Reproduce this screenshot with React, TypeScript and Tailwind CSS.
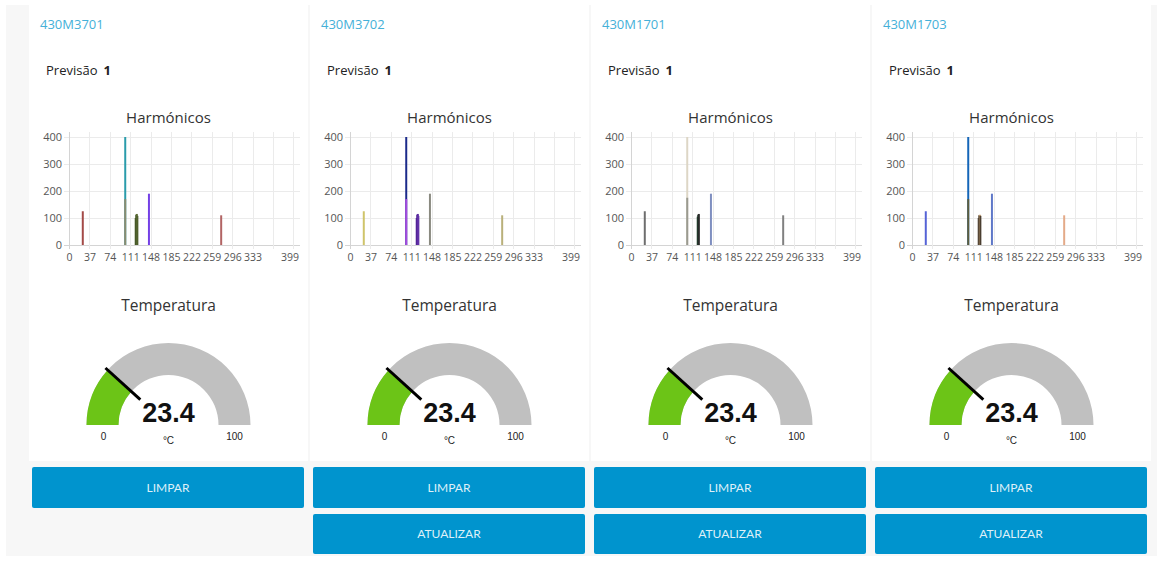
import React from 'react';

type Bar = { x: number; v: number; c: string; w?: number };

type Machine = { id: string; bars: Bar[]; refresh: boolean };

const machines: Machine[] = [
  {
    id: '430M3701',
    refresh: false,
    bars: [
      { x: 25, v: 125, c: '#a34a47' },
      { x: 102, v: 400, c: '#2a9cab' },
      { x: 102, v: 170, c: '#8c8c70' },
      { x: 121, v: 100, c: '#4e5f2c' },
      { x: 122, v: 112, c: '#3f5226' },
      { x: 123, v: 115, c: '#5b6b33' },
      { x: 124, v: 108, c: '#4e5f2c' },
      { x: 145, v: 190, c: '#7440e6' },
      { x: 276, v: 110, c: '#b26464' },
    ],
  },
  {
    id: '430M3702',
    refresh: true,
    bars: [
      { x: 25, v: 125, c: '#cfc46a' },
      { x: 102, v: 400, c: '#1b2a8a' },
      { x: 102, v: 170, c: '#a64be0' },
      { x: 121, v: 100, c: '#5a2aa0' },
      { x: 122, v: 112, c: '#4d2290' },
      { x: 123, v: 115, c: '#5a2aa0' },
      { x: 124, v: 108, c: '#6232a8' },
      { x: 145, v: 190, c: '#8a8a80' },
      { x: 276, v: 110, c: '#b9b07a' },
    ],
  },
  {
    id: '430M1701',
    refresh: true,
    bars: [
      { x: 25, v: 125, c: '#6e6e6e' },
      { x: 102, v: 400, c: '#ddd6c6' },
      { x: 102, v: 175, c: '#9a9a90' },
      { x: 121, v: 105, c: '#2f4a3a' },
      { x: 122, v: 112, c: '#1f3a2a' },
      { x: 123, v: 115, c: '#2a2a2a' },
      { x: 145, v: 190, c: '#7f8fc0' },
      { x: 276, v: 110, c: '#808080' },
    ],
  },
  {
    id: '430M1703',
    refresh: true,
    bars: [
      { x: 25, v: 125, c: '#5563d6' },
      { x: 102, v: 400, c: '#1566b8' },
      { x: 102, v: 170, c: '#5e5e3e' },
      { x: 121, v: 100, c: '#4a3e30' },
      { x: 122, v: 110, c: '#3c3228' },
      { x: 123, v: 112, c: '#c8a070' },
      { x: 124, v: 108, c: '#4a3e30' },
      { x: 145, v: 190, c: '#5f78c8' },
      { x: 276, v: 110, c: '#e4aa88' },
    ],
  },
];

// chart scale
const X0 = 40;
const KX = 20.4 / 37;
const Y0 = 117;
const KY = 0.27;
const sx = (u: number) => X0 + u * KX;
const sy = (v: number) => Y0 - v * KY;

const xTicks = [0, 37, 74, 111, 148, 185, 222, 259, 296, 333];

function HarmonicChart({ bars }: { bars: Bar[] }) {
  return (
    <svg width={279} height={140} className="block font-['Open_Sans',sans-serif]">
      {[0, 100, 200, 300, 400].map((v) => (
        <g key={v}>
          <line x1={35} x2={271} y1={sy(v) + 0.5} y2={sy(v) + 0.5} stroke={v === 0 ? '#d4d4d4' : '#ebebeb'} />
          <text x={33} y={sy(v) + 4} textAnchor="end" fontSize={11} fill="#555">
            {v}
          </text>
        </g>
      ))}
      {Array.from({ length: 12 }).map((_, i) => (
        <line
          key={i}
          x1={Math.round(sx(i * 37)) + 0.5}
          x2={Math.round(sx(i * 37)) + 0.5}
          y1={4}
          y2={121}
          stroke={i === 0 ? '#d4d4d4' : '#ebebeb'}
        />
      ))}
      {xTicks.map((t) => (
        <text key={t} x={sx(t) + 0.5} y={133} textAnchor="middle" fontSize={10.5} fill="#555">
          {t}
        </text>
      ))}
      <text x={sx(399) + 1} y={133} textAnchor="middle" fontSize={10.5} fill="#555">
        399
      </text>
      {bars.map((b, i) => (
        <line key={i} x1={sx(b.x)} x2={sx(b.x)} y1={Y0} y2={sy(b.v)} stroke={b.c} strokeWidth={b.w ?? 2} />
      ))}
    </svg>
  );
}

function Gauge({ value }: { value: number }) {
  const cx = 139.5;
  const cy = 95;
  const ro = 82;
  const ri = 50;
  const a = Math.PI * (value / 100);
  const ox = cx - ro * Math.cos(a);
  const oy = cy - ro * Math.sin(a);
  const ix = cx - ri * Math.cos(a);
  const iy = cy - ri * Math.sin(a);

  return (
    <svg width={279} height={125} className="block font-['Liberation_Sans',Arial,sans-serif]">
      <path
        d={`M ${cx - ro} ${cy} A ${ro} ${ro} 0 0 1 ${cx + ro} ${cy} L ${cx + ri} ${cy} A ${ri} ${ri} 0 0 0 ${cx - ri} ${cy} Z`}
        fill="#c0c0c0"
      />
      <path
        d={`M ${cx - ro} ${cy} A ${ro} ${ro} 0 0 1 ${ox} ${oy} L ${ix} ${iy} A ${ri} ${ri} 0 0 0 ${cx - ri} ${cy} Z`}
        fill="#6cc417"
      />
      <line
        x1={cx - 85 * Math.cos(a)}
        y1={cy - 85 * Math.sin(a)}
        x2={cx - 38 * Math.cos(a)}
        y2={cy - 38 * Math.sin(a)}
        stroke="#000"
        strokeWidth={3}
      />
      <text x={cx} y={cy - 3} textAnchor="middle" fontSize={27} fontWeight={700} fill="#111">
        {value.toFixed(1)}
      </text>
      <text x={cx - 65} y={cy + 15} textAnchor="middle" fontSize={10} fill="#222">
        0
      </text>
      <text x={cx + 66} y={cy + 15} textAnchor="middle" fontSize={10} fill="#222">
        100
      </text>
      <text x={cx} y={cy + 19} textAnchor="middle" fontSize={10} fill="#222">
        °C
      </text>
    </svg>
  );
}

function MachineCard({ machine }: { machine: Machine }) {
  return (
    <div className="flex flex-col">
      <div className="h-[456px] bg-white">
        <div className="flex h-[40px] items-center pl-[11px] text-[13px] text-[#45b0d8]">{machine.id}</div>
        <div className="flex h-[52px] items-center pl-[17px] text-[13px] text-[#222]">
          Previsão <span className="ml-[6px] font-bold">1</span>
        </div>
        <div className="h-[31px] pt-[10px] text-center text-[15px] leading-[20px] text-[#333]">Harmónicos</div>
        <HarmonicChart bars={machine.bars} />
        <div className="h-[62px] pt-[26px] text-center text-[15.5px] leading-[22px] text-[#333]">Temperatura</div>
        <Gauge value={23.4} />
      </div>
      <div className="flex flex-col gap-[6px] pl-[3px] pr-[4px] pt-[6px] font-['Lato',sans-serif] text-[12px] text-[#dff0f8]">
        <button className="h-[41px] rounded-[2px] bg-[#0094ce] uppercase">Limpar</button>
        {machine.refresh && <button className="h-[40px] rounded-[2px] bg-[#0094ce] uppercase">Atualizar</button>}
      </div>
    </div>
  );
}

export default function App() {
  return (
    <div className="h-[561px] w-[1163px] bg-white px-[6px] pt-[5px] font-['Open_Sans',sans-serif]">
      <div className="grid h-[551px] grid-cols-4 gap-[2px] bg-[#f7f7f7] pl-[23px] pr-[6px]">
        {machines.map((m) => (
          <MachineCard key={m.id} machine={m} />
        ))}
      </div>
    </div>
  );
}
